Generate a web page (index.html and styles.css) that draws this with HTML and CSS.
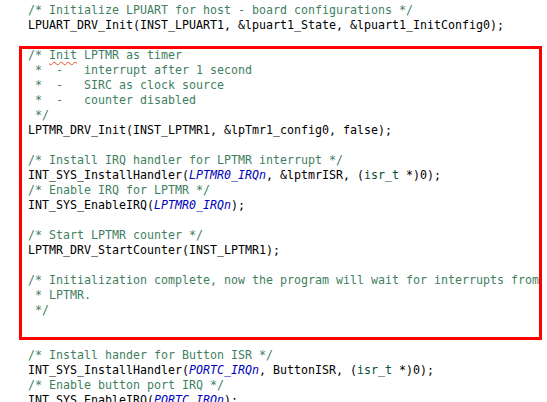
FILE: index.html
```html
<!DOCTYPE html>
<html lang="en">
<head>
    <meta charset="UTF-8">
    <title>main.c</title>
    <link rel="stylesheet" href="styles.css">
</head>
<body>
    <!-- Editor view -->
    <div class="editor">
<pre class="code"><span class="cm">    /* Initialize LPUART for host - board configurations */</span>
    LPUART_DRV_Init(INST_LPUART1, &amp;lpuart1_State, &amp;lpuart1_InitConfig0);

<span class="cm">    /* <span class="typo">Init</span> LPTMR as timer
     *  -   interrupt after 1 second
     *  -   SIRC as clock source
     *  -   counter disabled
     */</span>
    LPTMR_DRV_Init(INST_LPTMR1, &amp;lpTmr1_config0, false);

<span class="cm">    /* Install IRQ handler for LPTMR interrupt */</span>
    INT_SYS_InstallHandler(<span class="en">LPTMR0_IRQn</span>, &amp;lptmrISR, (<span class="ty">isr_t</span> *)0);
<span class="cm">    /* Enable IRQ for LPTMR */</span>
    INT_SYS_EnableIRQ(<span class="en">LPTMR0_IRQn</span>);

<span class="cm">    /* Start LPTMR counter */</span>
    LPTMR_DRV_StartCounter(INST_LPTMR1);

<span class="cm">    /* Initialization complete, now the program will wait for interrupts from
     * LPTMR.
     */</span>


<span class="cm">    /* Install hander for Button ISR */</span>
    INT_SYS_InstallHandler(<span class="en">PORTC_IRQn</span>, ButtonISR, (<span class="ty">isr_t</span> *)0);
<span class="cm">    /* Enable button port IRQ */</span>
    INT_SYS_EnableIRQ(<span class="en">PORTC_IRQn</span>);</pre>
        <!-- highlight box drawn over the code -->
        <div class="highlight"></div>
    </div>
</body>
</html>
```

FILE: styles.css
```css
* {
    margin: 0;
    padding: 0;
    box-sizing: border-box;
}

body {
    background: #fff;
    overflow: hidden;
}

.editor {
    position: relative;
    height: 402px;
    padding: 3px 0 0 0;
}

.code {
    font-family: 'DejaVu Sans Mono', monospace;
    font-size: 11.63px;
    line-height: 15px;
    color: #000;
    margin-left: 0;
    position: relative;
    left: 0;
    tab-size: 4;
}

.code {
    padding-left: 0;
    text-indent: 0;
}

.cm {
    color: #3f7f5f;
}

.en {
    color: #0000c0;
    font-style: italic;
}

.ty {
    color: #005032;
}

.typo {
    text-decoration: underline wavy #e8501e;
    text-decoration-thickness: 1px;
    text-underline-offset: 2px;
}

.highlight {
    position: absolute;
    left: 19px;
    top: 46px;
    width: 523px;
    height: 294px;
    border: 3px solid #ff0000;
}
```
